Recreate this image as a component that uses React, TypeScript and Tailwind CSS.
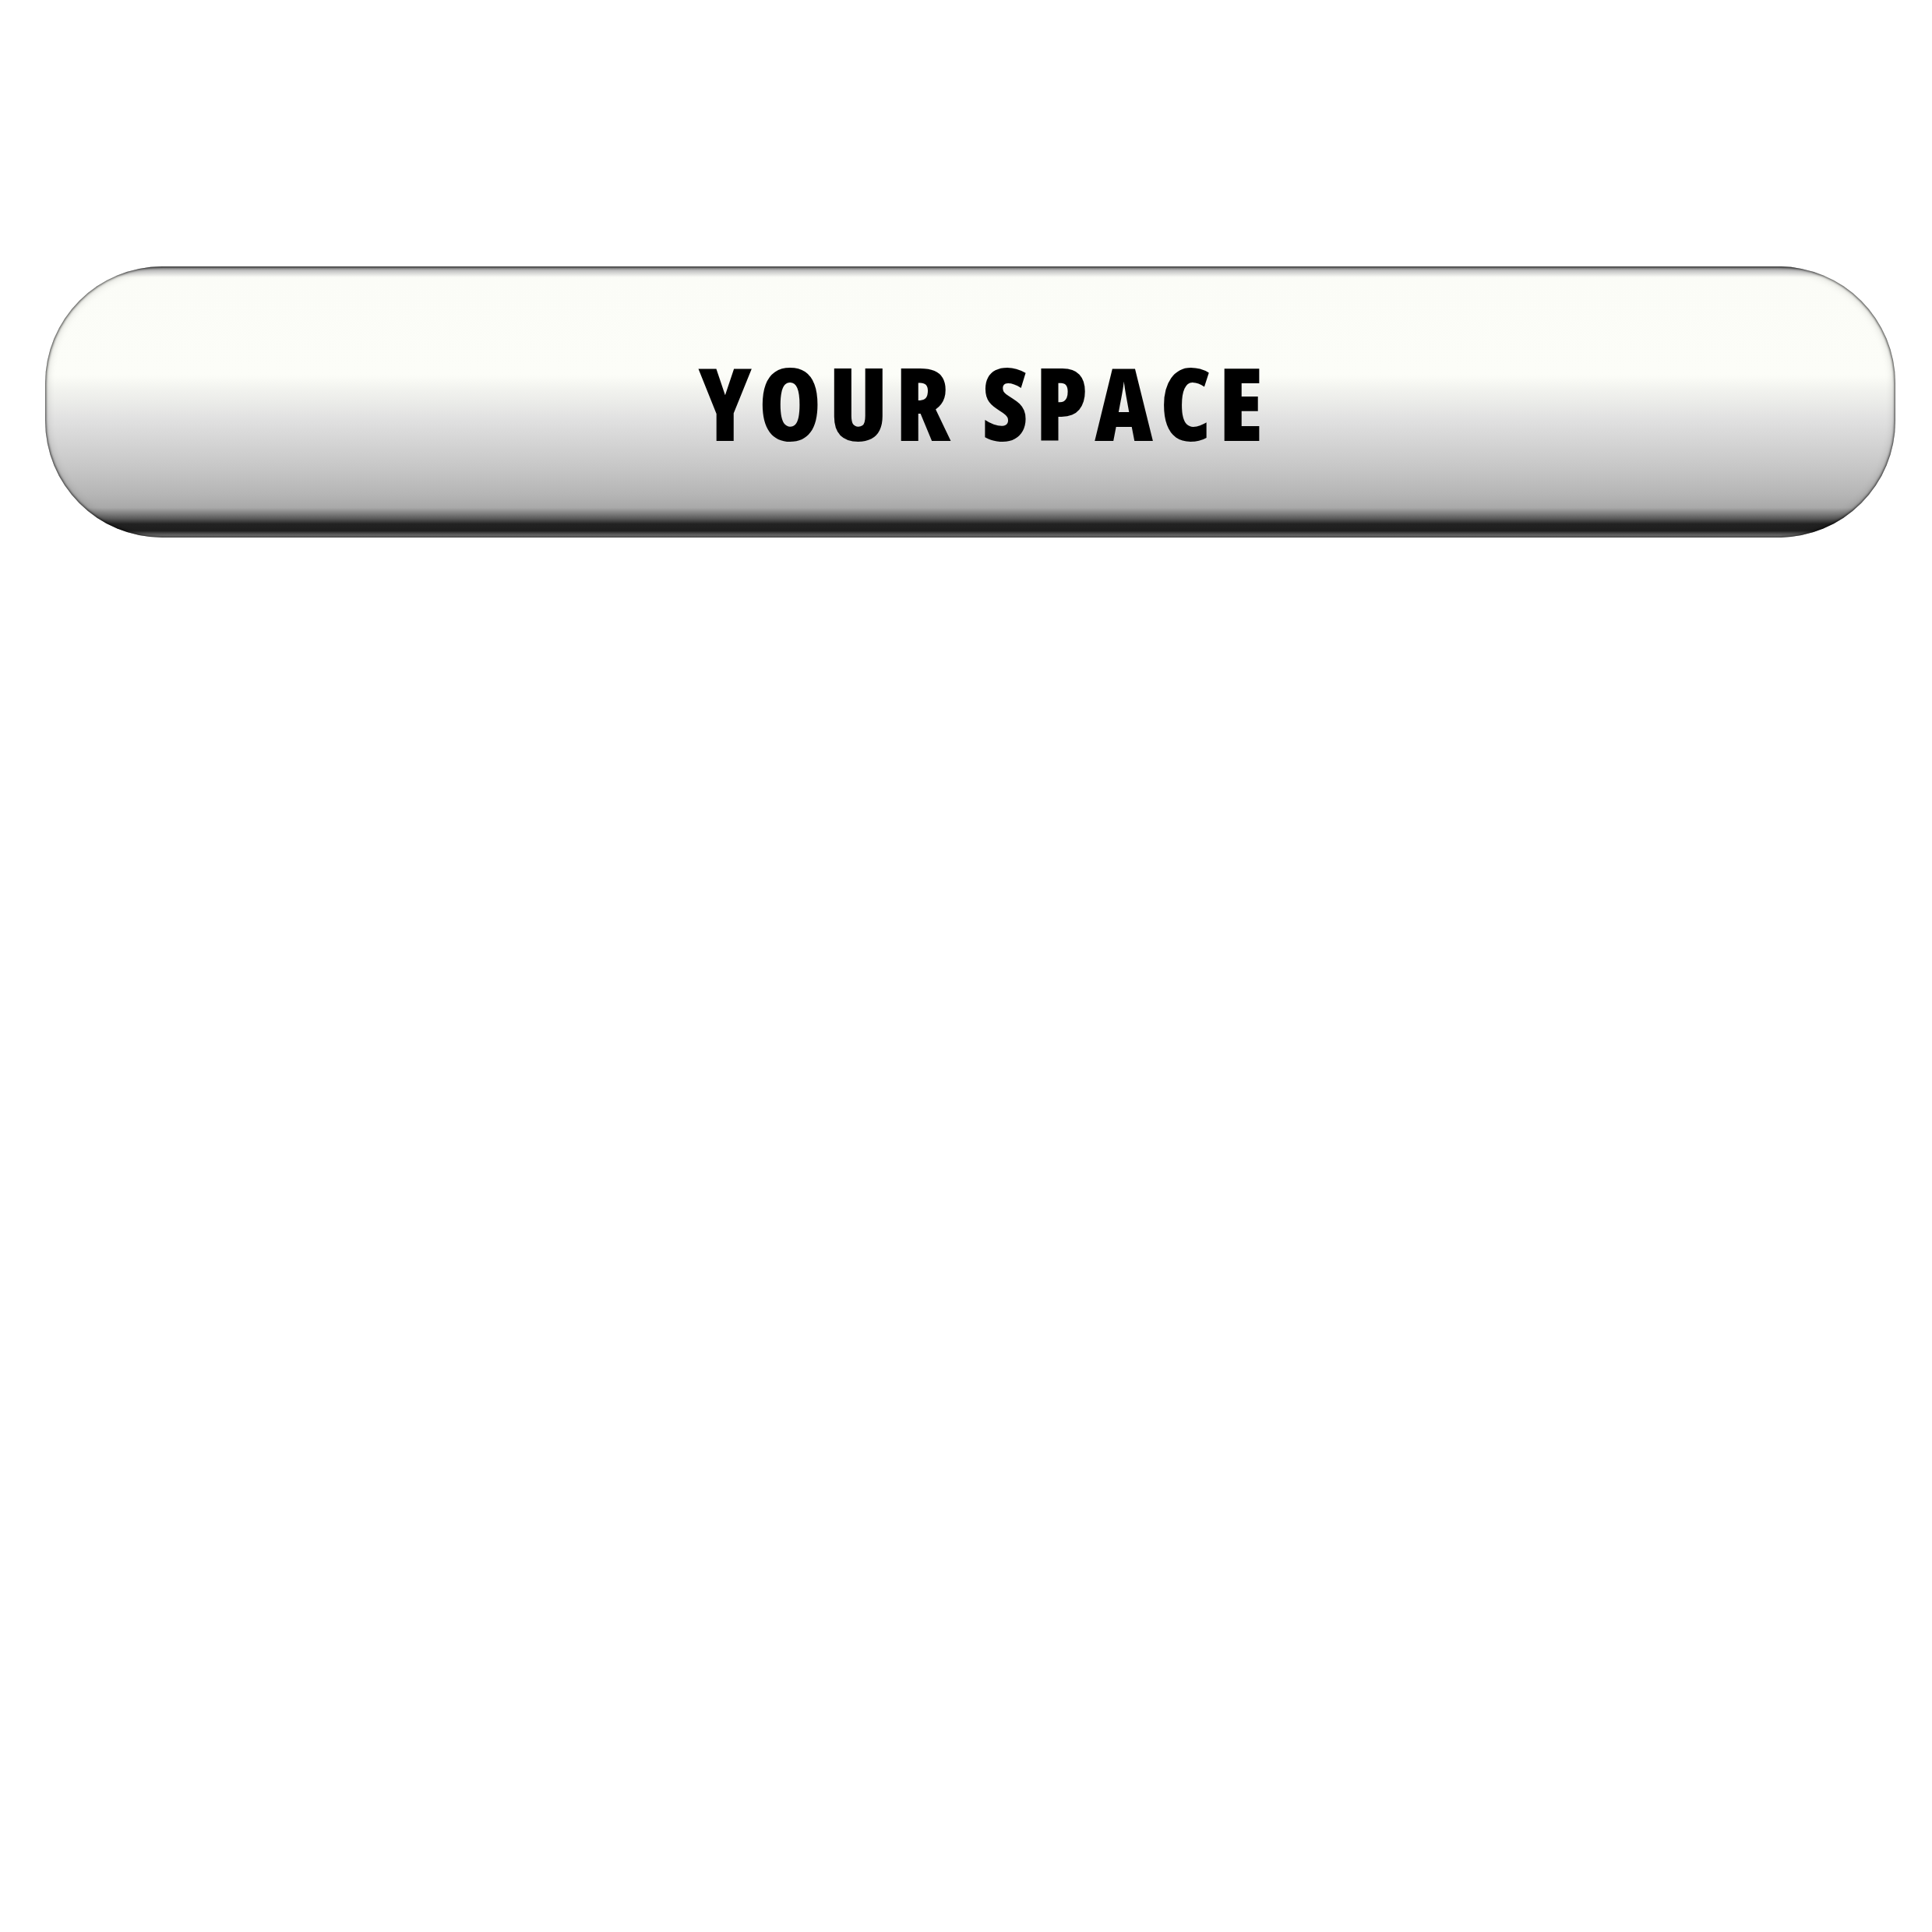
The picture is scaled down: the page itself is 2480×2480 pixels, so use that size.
export default function App() {
	return (
		<div className="min-h-[2480px] w-full bg-white pl-[58px] pr-[47px] pt-[342px]">
			{/* Glossy pill button */}
			<div className="flex h-[348px] w-full items-center justify-center rounded-[150px] bg-[linear-gradient(to_bottom,#7d7d7d_0%,#c9c9c9_1.6%,#fbfcf7_4%,#fcfdf8_40%,#f1f2ee_46%,#e0e0e0_57%,#cacaca_72%,#b6b6b6_84%,#a9a9a9_89%,#5a5a5a_93%,#222222_95%,#1f1f1f_97.5%,#9a9a9a_100%)] shadow-[inset_0_0_3px_1px_rgba(0,0,0,0.7),inset_0_0_12px_rgba(0,0,0,0.25)]">
				<span className="pl-[36px] font-['Open_Sans','DejaVu_Sans_Condensed',sans-serif] text-[130px] font-extrabold leading-none tracking-[9px] text-black [font-stretch:80%]">
					YOUR SPACE
				</span>
			</div>
		</div>
	);
}
